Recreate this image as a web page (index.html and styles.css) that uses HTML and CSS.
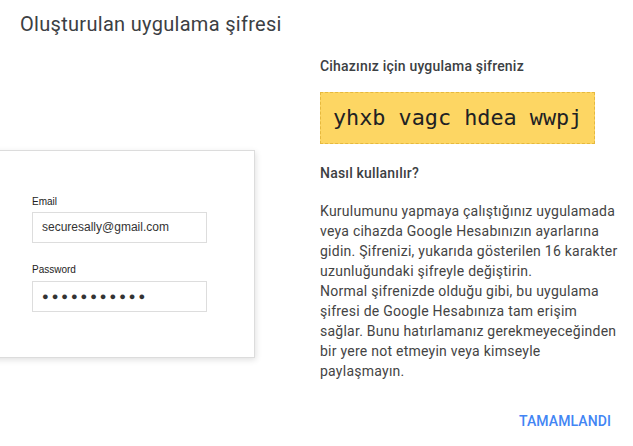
FILE: index.html
```html
<!DOCTYPE html>
<html lang="tr">
<head>
<meta charset="utf-8">
<link rel="stylesheet" href="styles.css">
</head>
<body>
<div class="page">
  <h1 class="title">Oluşturulan uygulama şifresi</h1>
  <div class="content">
    <div class="left">
      <div class="card">
        <div class="field-label">Email</div>
        <div class="field">securesally@gmail.com</div>
        <div class="field-label second">Password</div>
        <div class="field dots">●●●●●●●●●●●</div>
      </div>
    </div>
    <div class="right">
      <div class="subhead">Cihazınız için uygulama şifreniz</div>
      <div class="code">yhxb vagc hdea wwpj</div>
      <div class="subhead how">Nasıl kullanılır?</div>
      <p class="body">Kurulumunu yapmaya çalıştığınız uygulamada veya cihazda Google Hesabınızın ayarlarına gidin. Şifrenizi, yukarıda gösterilen 16 karakter uzunluğundaki şifreyle değiştirin.<br>Normal şifrenizde olduğu gibi, bu uygulama şifresi de Google Hesabınıza tam erişim sağlar. Bunu hatırlamanız gerekmeyeceğinden bir yere not etmeyin veya kimseyle paylaşmayın.</p>
    </div>
  </div>
  <div class="actions"><button class="done">TAMAMLANDI</button></div>
</div>
</body>
</html>
```
FILE: styles.css
```css
html, body {
  margin: 0;
  padding: 0;
  background: #fff;
  overflow: hidden;
}
.page {
  width: 633px;
  height: 446px;
  display: flex;
  flex-direction: column;
  font-family: Roboto, "Noto Sans", sans-serif;
  color: #3c4043;
  overflow: hidden;
}
.title {
  margin: 0;
  padding: 12px 20px;
  font-size: 20px;
  line-height: 24px;
  font-weight: 400;
  letter-spacing: 0.3px;
  color: #3c4043;
}
.content {
  display: flex;
}
.left {
  width: 320px;
  flex: none;
}
.card {
  margin-top: 102px;
  margin-left: -10px;
  width: 175px;
  padding: 46px 47px 45px 42px;
  background: #fff;
  border: 1px solid #dcdcdc;
  border-left: none;
  box-shadow: 1px 2px 6px rgba(0,0,0,0.12);
  font-family: "Liberation Sans", Arial, sans-serif;
}
.field-label {
  font-size: 10px;
  line-height: 12px;
  color: #222;
  margin-bottom: 4px;
  margin-top: -1px;
}
.field-label.second {
  margin-top: 21px;
  margin-bottom: 5px;
}
.field {
  box-sizing: border-box;
  height: 31px;
  border: 1px solid #ddd;
  padding: 0 9px;
  font-size: 12px;
  line-height: 29px;
  color: #333;
}
.field.dots {
  font-size: 11px;
  letter-spacing: 3px;
  color: #333;
}
.right {
  width: 300px;
  flex: none;
}
.subhead {
  margin-top: 8px;
  font-size: 14px;
  line-height: 20px;
  font-weight: 500;
  letter-spacing: 0.2px;
  color: #3c4043;
}
.subhead.how {
  margin-top: 19px;
}
.code {
  box-sizing: border-box;
  margin-top: 16px;
  width: 275px;
  height: 52px;
  background: #fdd663;
  border: 1px dashed #e6b93e;
  font-family: "DejaVu Sans Mono", "Liberation Mono", monospace;
  font-size: 21.8px;
  line-height: 50px;
  padding-left: 12px;
  color: #202124;
  white-space: nowrap;
}
.body {
  margin: 18px 0 0;
  font-size: 14px;
  line-height: 20px;
  letter-spacing: 0.25px;
  color: #444;
}
.actions {
  margin-top: auto;
  display: flex;
  justify-content: flex-end;
  padding: 0 14px 15px 0;
}
.done {
  border: none;
  background: none;
  font-family: Roboto, sans-serif;
  font-size: 14px;
  font-weight: 500;
  letter-spacing: 0.1px;
  color: #4285f4;
  padding: 0 8px;
  line-height: 20px;
  cursor: pointer;
}
```
